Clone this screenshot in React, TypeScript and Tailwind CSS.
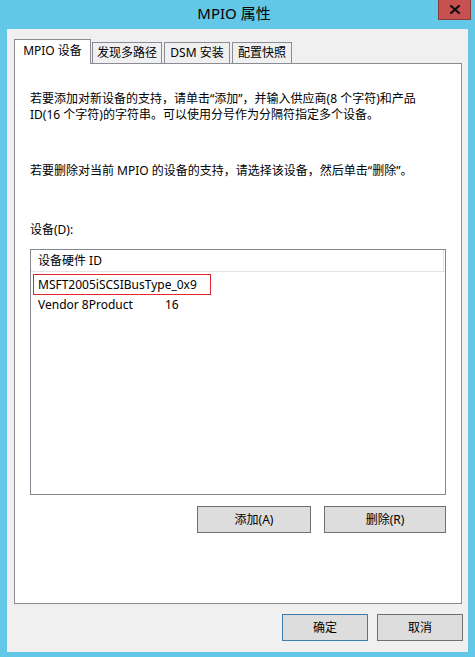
import React from 'react';

const font = { fontFamily: '"Noto Sans", "Noto Sans CJK SC", sans-serif' };

const Tab = ({ label, w }: { label: string; w: string }) => (
    <div className={`${w} h-[21px] mr-[2px] border border-b-0 border-[#898c95] bg-[#f0f0f0] flex items-center justify-center text-[12px] leading-none text-black`}>
        {label}
    </div>
);

export default function App() {
    return (
        <div style={font} className="w-[475px] h-[657px] bg-[#63c7e8] flex flex-col pl-[7px] pr-[7px] pb-[5px] select-none">
            {/* title bar */}
            <div className="relative h-[29px] shrink-0 flex items-center justify-center">
                <span className="text-[15px] text-black leading-none -mt-[2px] ml-[-7px]">MPIO 属性</span>
                <div className="absolute top-0 right-[-3px] w-[33px] h-[20px] bg-[#c75050] border border-t-0 border-[#8a3b3b] flex items-center justify-center">
                    <svg width="10" height="9" viewBox="0 0 10 9">
                        <path d="M1 1 L9 8 M9 1 L1 8" stroke="#111" strokeWidth="2.2" strokeLinecap="square" />
                    </svg>
                </div>
            </div>

            {/* client area */}
            <div className="flex-1 bg-[#f0f0f0] flex flex-col pl-[7px] pr-[6px] pt-[10px]">
                {/* tabs */}
                <div className="flex items-end h-[24px] relative z-10">
                    <div className="w-[77px] h-[25px] mr-[1px] border border-b-0 border-[#898c95] bg-white flex items-center justify-center text-[12px] leading-none text-black -mb-[1px] pb-[3px]">
                        MPIO 设备
                    </div>
                    <Tab label="发现多路径" w="w-[70px]" />
                    <Tab label="DSM 安装" w="w-[66px]" />
                    <Tab label="配置快照" w="w-[60px]" />
                </div>

                {/* panel */}
                <div className="h-[541px] bg-white border border-[#898c95] flex flex-col px-[15px] pt-[27px] text-[12px] text-black">
                    <p className="leading-[16px] whitespace-nowrap">
                        若要添加对新设备的支持，请单击“添加”，并输入供应商(8 个字符)和产品<br />
                        ID(16 个字符)的字符串。可以使用分号作为分隔符指定多个设备。
                    </p>
                    <p className="leading-[16px] mt-[40px] whitespace-nowrap">
                        若要删除对当前 MPIO 的设备的支持，请选择该设备，然后单击“删除”。
                    </p>
                    <p className="leading-[16px] mt-[43px]">设备(D):</p>

                    <div className="mt-[11px] h-[246px] border border-[#828790] flex flex-col">
                        <div className="h-[22px] border-b border-[#e5e5e5] flex items-center">
                            <div className="flex-1 h-full border-r border-[#e5e5e5] flex items-center pl-[7px]">设备硬件 ID</div>
                            <div className="w-[1px]" />
                        </div>
                        <div className="pl-[2px] pt-[2px]">
                            <div className="inline-flex h-[21px] w-[178px] items-center border border-[#e3262c] pl-[4px]">
                                MSFT2005iSCSIBusType_0x9
                            </div>
                        </div>
                        <div className="flex h-[20px] items-center pl-[7px]">
                            <span className="w-[127px]">Vendor 8Product</span>
                            <span>16</span>
                        </div>
                    </div>

                    <div className="mt-[11px] flex justify-end gap-[13px]">
                        <button className="w-[114px] h-[27px] bg-[#dddddd] border border-[#707070] text-[12px] text-black">添加(A)</button>
                        <button className="w-[122px] h-[27px] bg-[#dddddd] border border-[#707070] text-[12px] text-black">删除(R)</button>
                    </div>
                </div>

                {/* dialog buttons */}
                <div className="mt-[10px] flex justify-end gap-[9px] -mr-[1px]">
                    <button className="w-[86px] h-[27px] bg-[#dddddd] border border-[#3c7fb1] text-[12px] text-black">确定</button>
                    <button className="w-[86px] h-[27px] bg-[#dddddd] border border-[#707070] text-[12px] text-black">取消</button>
                </div>
            </div>
        </div>
    );
}
